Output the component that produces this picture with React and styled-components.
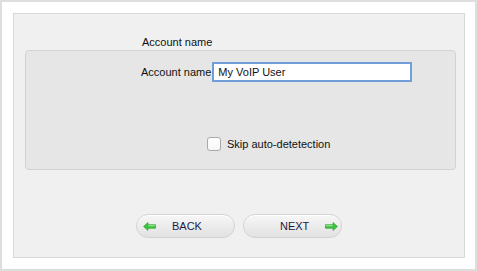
import React from "react";
import styled, { createGlobalStyle } from "styled-components";

const GlobalStyle = createGlobalStyle`
  html, body { margin: 0; padding: 0; background: #ffffff; }
  body { font-family: "Liberation Sans", Arial, Helvetica, sans-serif; }
`;

const Frame = styled.div`
  box-sizing: border-box;
  width: 477px;
  height: 271px;
  border: 2px solid #dedede;
  background: #ffffff;
  padding: 11px 11px 12px 11px;
`;

const Panel = styled.div`
  box-sizing: border-box;
  width: 452px;
  height: 245px;
  background: #f0f0f0;
  border: 1px solid #d9d9d9;
  padding: 0 8px 0 11px;
  display: flex;
  flex-direction: column;
`;

const Heading = styled.div`
  font-size: 11px;
  color: #111;
  margin: 22px 0 0 117px;
  height: 13px;
  line-height: 13px;
`;

const Group = styled.div`
  box-sizing: border-box;
  height: 120px;
  margin-top: 1px;
  background: #e6e6e6;
  border: 1px solid #d2d2d2;
  border-radius: 4px;
  display: flex;
  flex-direction: column;
`;

const FieldRow = styled.div`
  display: flex;
  align-items: center;
  margin: 11px 0 0 0;
  padding-left: 115px;
`;

const Label = styled.label`
  font-size: 11px;
  color: #111;
  margin-right: 1px;
`;

const Input = styled.input`
  box-sizing: border-box;
  width: 200px;
  height: 20px;
  border: 2px solid #6f9fd8;
  background: #ffffff;
  padding: 0 4px;
  font-family: inherit;
  font-size: 11px;
  color: #111;
  outline: none;
`;

const CheckRow = styled.div`
  display: flex;
  align-items: center;
  margin-top: 55px;
  padding-left: 181px;
`;

const Box = styled.span`
  box-sizing: border-box;
  width: 14px;
  height: 14px;
  border: 1px solid #a9a9a9;
  border-radius: 3px;
  background: linear-gradient(#ffffff, #f6f6f6);
  margin-right: 6px;
`;

const CheckText = styled.span`
  font-size: 11px;
  color: #111;
`;

const Buttons = styled.div`
  display: flex;
  justify-content: center;
  gap: 8px;
  margin-top: 44px;
  padding-right: 3px;
`;

const Pill = styled.button`
  box-sizing: border-box;
  width: 99px;
  height: 24px;
  border-radius: 12px;
  border: 1px solid #d3d3d3;
  background: linear-gradient(#f7f7f7 0%, #ececec 50%, #e2e2e2 100%);
  box-shadow: inset 0 1px 0 #ffffff;
  display: flex;
  align-items: center;
  padding: ${(p) => (p.$next ? "0 6px 0 36px" : "0 0 0 6px")};
  font-family: inherit;
  font-size: 11px;
  color: #1c1c44;
  svg { flex-shrink: 0; }
`;

const Caption = styled.span`
  margin: ${(p) => (p.$next ? "0 16px 0 0" : "0 0 0 16px")};
`;

const Arrow = ({ flip }) => (
  <svg width="13" height="9" viewBox="0 0 13 9" style={flip ? { transform: "scaleX(-1)" } : undefined}>
    <path d="M0.5 4.5 L5 0.5 L5 2.7 L12.5 2.7 L12.5 6.3 L5 6.3 L5 8.5 Z" fill="#3cc23c" stroke="#2a9a2a" strokeWidth="0.6" />
    <path d="M5.4 3.1 L12 3.1 L12 4.3 L5.4 4.3 Z" fill="#8ee88e" />
  </svg>
);

export default function App() {
  return (
    <>
      <GlobalStyle />
      <Frame>
        <Panel>
          <Heading>Account name</Heading>
          <Group>
            <FieldRow>
              <Label>Account name</Label>
              <Input defaultValue="My VoIP User" />
            </FieldRow>
            <CheckRow>
              <Box />
              <CheckText>Skip auto-detetection</CheckText>
            </CheckRow>
          </Group>
          <Buttons>
            <Pill>
              <Arrow />
              <Caption>BACK</Caption>
            </Pill>
            <Pill $next>
              <Caption $next>NEXT</Caption>
              <Arrow flip />
            </Pill>
          </Buttons>
        </Panel>
      </Frame>
    </>
  );
}
